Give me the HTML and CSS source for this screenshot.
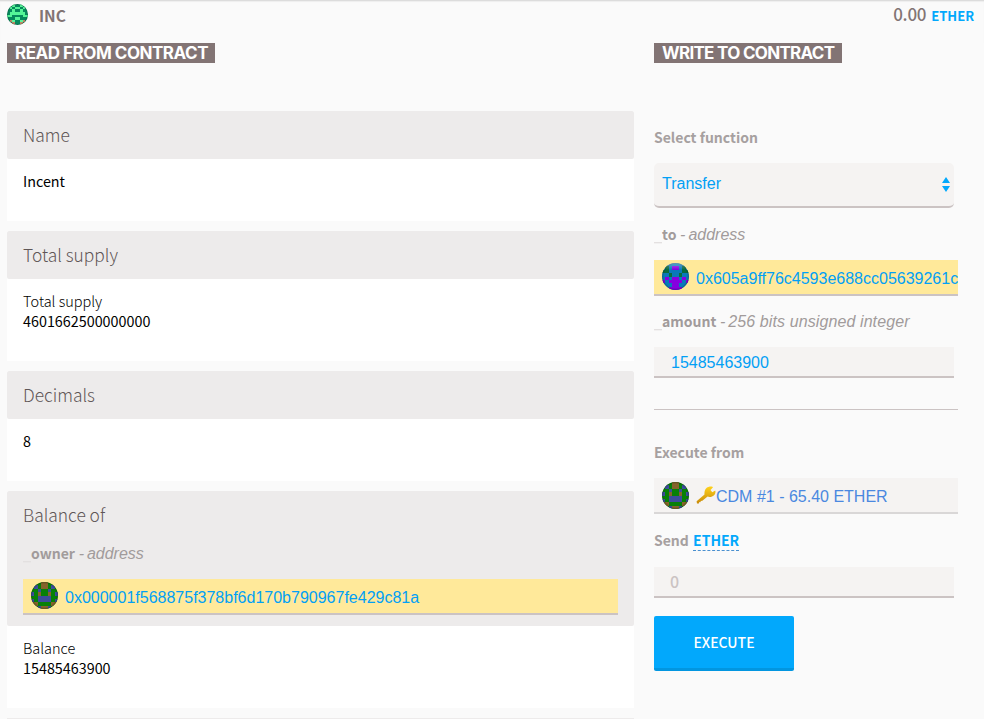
FILE: index.html
```html
<!DOCTYPE html>
<html lang="en">
<head>
<meta charset="utf-8">
<title>Contract INC</title>
<link rel="stylesheet" href="styles.css">
</head>
<body>
<svg class="defs" width="0" height="0" aria-hidden="true">
  <defs>
    <clipPath id="round"><circle cx="4" cy="4" r="4"/></clipPath>
    <radialGradient id="shade" cx=".5" cy=".5" r=".5"><stop offset=".85" stop-color="#000" stop-opacity="0"/><stop offset="1" stop-color="#000" stop-opacity=".25"/></radialGradient>
    <linearGradient id="shine" x2="0" y2="1"><stop offset="0" stop-color="#fff" stop-opacity=".35"/><stop offset=".25" stop-color="#fff" stop-opacity="0"/></linearGradient>
    <linearGradient id="gold" x2="0" y2="1"><stop offset="0" stop-color="#ffd21c"/><stop offset="1" stop-color="#c88a0a"/></linearGradient>
    <symbol id="owner" viewBox="0 0 8 8"><g clip-path="url(#round)"><g shape-rendering="crispEdges"><path fill="#078008" d="M0 0h8v8H0z"/><path fill="#85642b" d="M3 0h2v2H3zM2 3h1v1H2zM5 3h1v1H5zM0 6h2v1H0zM6 6h2v1H6zM3 7h2v1H3z"/><path fill="#3c4c9c" d="M1 1h1v1H1zM6 1h1v1H6zM0 3h1v1H0zM7 3h1v1H7zM2 2h1v1H2zM5 2h1v1H5zM3 4h2v1H3zM2 4h4v2H2zM0 5h1v1H0zM7 5h1v1H7zM2 7h1v1H2zM5 7h1v1H5z"/></g><path fill="url(#shade)" d="M0 0h8v8H0z"/></g></symbol>
    <symbol id="dest" viewBox="0 0 8 8"><g clip-path="url(#round)"><g shape-rendering="crispEdges"><path fill="#0879b9" d="M0 0h8v8H0z"/><path fill="#086b3d" d="M1 1h1v1H1zM6 1h1v1H6zM0 2h2v1H0zM6 2h2v1H6zM2 3h1v1H2zM5 3h1v1H5z"/><path fill="#8500df" d="M3 1h2v1H3zM1 4h1v1H1zM6 4h1v1H6zM3 4h2v1H3zM2 5h4v1H2zM0 5h1v1H0zM7 5h1v1H7zM3 6h2v1H3zM2 7h4v1H2z"/></g><path fill="url(#shade)" d="M0 0h8v8H0z"/><path fill="url(#shine)" d="M0 0h8v8H0z"/></g></symbol>
    <symbol id="token" viewBox="0 0 8 8"><g clip-path="url(#round)"><g shape-rendering="crispEdges"><path fill="#07895d" d="M0 0h8v8H0z"/><path fill="#55f598" d="M2 0h1v1H2zM5 0h1v1H5zM3 1h2v1H3zM1 1h1v1H1zM6 1h1v1H6zM2 2h1v1H2zM5 2h1v1H5zM1 3h2v1H1zM5 3h2v1H5zM3 3h2v1H3zM0 4h2v1H0zM6 4h2v1H6zM3 5h2v1H3zM2 6h1v1H2zM5 6h1v1H5z"/><path fill="#c08a68" d="M1 6h1v1H1zM6 6h1v1H6zM2 7h1v1H2zM5 7h1v1H5z"/></g><path fill="url(#shade)" d="M0 0h8v8H0z"/></g></symbol>
  </defs>
</svg>
<header class="top">
  <svg class="token-icon"><use href="#token"/></svg>
  <span class="token-name">INC</span>
  <span class="balance">0.00</span><span class="unit">ETHER</span>
</header>
<main class="columns">
  <section class="read">
    <h2 class="title">READ FROM CONTRACT</h2>
    <article class="card first"><h3>Name</h3><div class="out"><p>Incent</p></div></article>
    <article class="card tall"><h3>Total supply</h3><div class="out"><p class="light">Total supply</p><p>4601662500000000</p></div></article>
    <article class="card"><h3>Decimals</h3><div class="out"><p>8</p></div></article>
    <article class="card with-input">
      <div class="inputs">
        <h3>Balance of</h3>
        <label class="param"><i class="under">_</i><b>owner</b><span> - </span><em>address</em></label>
        <div class="address"><svg class="ident"><use href="#owner"/></svg><span>0x000001f568875f378bf6d170b790967fe429c81a</span></div>
      </div>
      <div class="out"><p class="light">Balance</p><p>15485463900</p></div>
    </article>
    <div class="next"></div>
  </section>
  <section class="write">
    <h2 class="title narrow">WRITE TO CONTRACT</h2>
    <div class="caption select-caption">Select function</div>
    <div class="select"><span>Transfer</span><svg class="arrows" viewBox="0 0 8 15"><path d="M4 0l4 6H0zM4 15L0 9h8z"/></svg></div>
    <label class="param to"><i class="under">_</i><b>to</b><span> - </span><em>address</em></label>
    <div class="address"><svg class="ident"><use href="#dest"/></svg><span>0x605a9ff76c4593e688cc05639261c</span></div>
    <label class="param amount"><i class="under">_</i><b>amount</b><span> - </span><em>256 bits unsigned integer</em></label>
    <div class="field">15485463900</div>
    <hr>
    <div class="caption">Execute from</div>
    <div class="address account"><svg class="ident"><use href="#owner"/></svg><svg class="key" viewBox="0 0 20 18"><path fill="url(#gold)" d="M8.500 8.500C8 5 9.500 1.500 13 .8c2-.5 4 0 4 .5L14.500 4l1.800 2.200L19.200 4.500c1 2-.5 5-3.200 6-1.500.7-3.300.6-4.400.1L6 15l-1-.3-.7 1.500-1-.2L2.800 17.500H1L.6 15.300z"/></svg><span>CDM #1 - 65.40 ETHER</span></div>
    <div class="caption send">Send <span class="link">ETHER</span></div>
    <div class="field zero">0</div>
    <div class="button">EXECUTE</div>
  </section>
</main>
</body>
</html>
```
FILE: styles.css
```css
* { box-sizing: border-box; }
body { margin: 0; width: 984px; height: 719px; overflow: hidden; background: #fafafa; color: #000; font: 14.35px/20px "Noto Sans CJK SC", sans-serif; }
h2, h3, p { margin: 0; }
span, b, em, p, h2, h3 { white-space: nowrap; }
.defs { position: absolute; }
.top { height: 43px; border-top: 1px solid #dcdcdc; box-shadow: inset 0 1px 1px #eee; padding: 3px 10px 0 7px; display: flex; align-items: flex-start; color: #827474; }
.token-icon { width: 21px; height: 21px; margin-right: 11px; }
.token-name { font-size: 15.5px; line-height: 22px; font-weight: 700; margin-right: auto; }
.balance { font-size: 17px; line-height: 20px; font-weight: 500; letter-spacing: -.3px; margin-right: 5px; }
.unit { color: #02a8fc; font-weight: 700; font-size: 13px; line-height: 24px; }
.columns { display: flex; padding-left: 7px; }
.read { width: 627px; margin-right: 20px; }
.write { width: 304px; }
.title { width: 208px; height: 20px; padding-left: 8px; background: #827474; color: #fff; font: 700 17px/21px Inter, sans-serif; letter-spacing: -.48px; }
.title.narrow { width: 188px; letter-spacing: -.7px; }
.card { height: 110px; margin-bottom: 10px; background: #fff; display: flex; flex-direction: column; }
.card.first { margin-top: 48px; }
.card.tall { height: 130px; }
.card.with-input { height: 217px; }
h3 { height: 48px; padding-left: 16px; background: #edebeb; color: #5f5656; font-size: 17.4px; line-height: 48px; font-weight: 300; border-radius: 2px; }
.out { padding: 12px 16px; }
.light { font-weight: 300; font-size: 14.5px; }
.inputs { height: 135px; padding: 0 16px; background: #edebeb; border-radius: 2px; }
.inputs h3 { padding: 0; }
.param { display: flex; height: 20px; color: #a19b9b; font: italic 16px/20px "Liberation Sans", sans-serif; }
.param span { white-space: pre; letter-spacing: -.75px; }
.param b { font: 700 14px/18px "Noto Sans CJK SC", sans-serif; }
.amount em { letter-spacing: .1px; }
.under { width: 8px; color: #e3e0e0; font-style: normal; overflow: hidden; }
.inputs .param { margin: 5px 0 15px; }
.address { height: 36px; background: #ffe99a; border-bottom: 2px solid #cbc3c3; display: flex; align-items: center; padding-left: 8px; color: #02a0f5; font: 16px/20px "Liberation Sans", sans-serif; overflow: hidden; }
.address span { padding-top: 3px; }
.ident { width: 27px; height: 27px; margin: -1px 7px 0 0; flex: none; }
.next { height: 10px; background: #edebeb; }
.caption { color: #a6a0a0; font-weight: 700; font-size: 14px; line-height: 18px; height: 20px; }
.select-caption { margin: 65px 0 15px; }
.select { width: 300px; height: 45px; background: #f5f3f2; border-bottom: 2px solid #cbc3c3; border-radius: 5px; padding: 0 4px 2px 8px; display: flex; align-items: center; justify-content: space-between; color: #02a0f5; font: 16px/20px "Liberation Sans", sans-serif; }
.arrows { width: 8px; height: 15px; fill: #02a8fc; margin-top: 2px; }
.param.to { margin: 17px 0 15px; }
.param.amount { margin: 16px 0 15px; }
.field { width: 300px; height: 31px; background: #f5f3f2; border-bottom: 2px solid #cbc3c3; padding-left: 17px; color: #02a0f5; font: 16px/31px "Liberation Sans", sans-serif; }
hr { margin: 31px 0 33px; border: 0; height: 1px; background: #cbc3c3; }
.account { margin: 15px 0 17px; background: #f5f3f2; border-color: #d9d7d7; color: #4a88e0; }
.account .ident { margin-top: 1px; }
.key { width: 20px; height: 18px; flex: none; }
.link { display: inline-block; height: 20px; margin-left: 1px; color: #02a8fc; border-bottom: 1px dashed #4a90d0; }
.zero { margin: 16px 0 18px; padding-left: 16px; color: #cbc3c3; font: 500 16px/29px "Noto Sans CJK SC", sans-serif; }
.button { width: 140px; height: 55px; background: #02a8fc; border-bottom: 3px solid #0296e0; border-radius: 2px; color: #fff; font-weight: 500; font-size: 14px; text-align: center; line-height: 52px; }
```
